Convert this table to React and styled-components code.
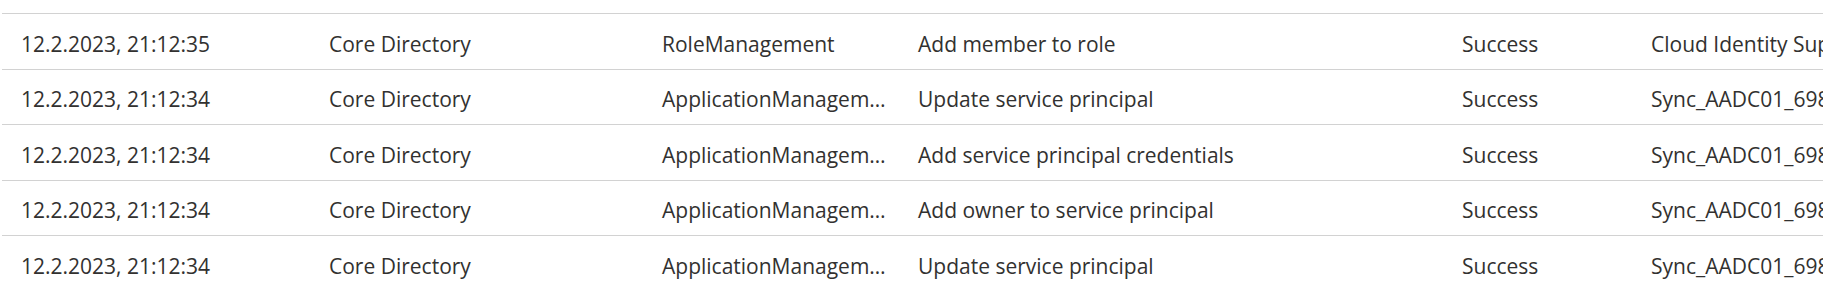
import React from 'react'
import styled, { createGlobalStyle } from 'styled-components'

const Global = createGlobalStyle`
  html, body {
    margin: 0;
    padding: 0;
    background: #fff;
    overflow: hidden;
  }
`

const Wrap = styled.div`
  padding-top: 13px;
  padding-left: 2px;
  width: 1900px;
  font-family: "Open Sans", "Noto Sans", sans-serif;
  font-size: 21px;
  color: #323130;
`

const Row = styled.div`
  display: grid;
  grid-template-columns: 308px 333px 256px 544px 189px 1fr;
  height: 55.5px;
  padding-top: 5px;
  box-sizing: border-box;
  border-top: 1px solid #d2d2d2;
  align-items: center;
`

const Cell = styled.div`
  padding: 0 ${p => (p.$tight ? '7px' : '19px')} 0 19px;
  white-space: nowrap;
  overflow: hidden;
  text-overflow: ellipsis;
`

const rows = [
  ['12.2.2023, 21:12:35', 'Core Directory', 'RoleManagement', 'Add member to role', 'Success', 'Cloud Identity Support Account'],
  ['12.2.2023, 21:12:34', 'Core Directory', 'ApplicationManagement', 'Update service principal', 'Success', 'Sync_AADC01_6981c0a2'],
  ['12.2.2023, 21:12:34', 'Core Directory', 'ApplicationManagement', 'Add service principal credentials', 'Success', 'Sync_AADC01_6981c0a2'],
  ['12.2.2023, 21:12:34', 'Core Directory', 'ApplicationManagement', 'Add owner to service principal', 'Success', 'Sync_AADC01_6981c0a2'],
  ['12.2.2023, 21:12:34', 'Core Directory', 'ApplicationManagement', 'Update service principal', 'Success', 'Sync_AADC01_6981c0a2'],
]

export default function App() {
  return (
    <>
      <Global />
      <Wrap>
        {rows.map((r, i) => (
          <Row key={i}>
            {r.map((c, j) => (
              <Cell key={j} $tight={j === 2}>{c}</Cell>
            ))}
          </Row>
        ))}
      </Wrap>
    </>
  )
}
